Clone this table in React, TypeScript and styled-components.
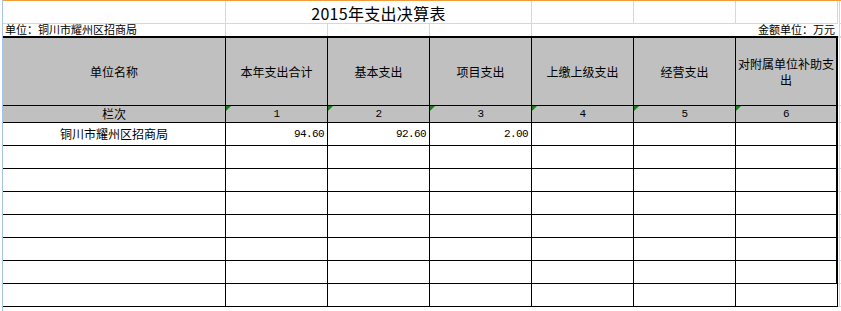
import React from 'react';
import styled, { createGlobalStyle } from 'styled-components';

// 表格颜色
const GRID = '#d0d7e5';
const INK = '#000';
const HEAD_FILL = '#c0c0c0';

const GlobalStyle = createGlobalStyle`
  html, body {
    margin: 0;
    padding: 0;
    background: #fff;
  }
  body {
    font-family: "Noto Sans CJK SC", "Noto Sans", sans-serif;
    color: #000;
    overflow: hidden;
  }
`;

const Sheet = styled.div`
  width: 838px;
  height: 311px;
  margin-left: 2px;
  border-left: 1px solid #a9c3e6;
`;

const Row = styled.div<{ $h: number; $top?: boolean }>`
  display: grid;
  grid-template-columns: 223px repeat(6, 102px) 3px;
  height: ${(p) => p.$h}px;
  box-sizing: border-box;
  border-top: ${(p) => (p.$top ? '1px solid #f29b38' : 'none')};
`;

// --- 表头上方的普通网格单元 ---
const GridCell = styled.div<{ $span?: number; $bottom?: boolean; $right?: boolean; $align?: 'left' | 'center' | 'right' }>`
  box-sizing: border-box;
  grid-column: span ${(p) => p.$span ?? 1};
  display: flex;
  align-items: center;
  justify-content: ${(p) => (p.$align === 'right' ? 'flex-end' : p.$align === 'center' ? 'center' : 'flex-start')};
  border-right: 1px solid ${(p) => (p.$right === false ? 'transparent' : GRID)};
  border-bottom: 1px solid ${(p) => (p.$bottom === false ? 'transparent' : GRID)};
  padding: 0 2px;
  font-size: 11px;
  line-height: 13px;
  white-space: nowrap;
  overflow: visible;
`;

const Title = styled.span`
  font-size: 16px;
  line-height: 20px;
  padding-top: 2px;
  letter-spacing: 0.3px;
`;

// --- 黑框表格单元 ---
const Cell = styled.div<{ $head?: boolean; $thick?: boolean; $first?: boolean; $align?: 'center' | 'right' }>`
  position: relative;
  box-sizing: border-box;
  display: flex;
  align-items: center;
  justify-content: ${(p) => (p.$align === 'right' ? 'flex-end' : 'center')};
  text-align: center;
  background: ${(p) => (p.$head ? HEAD_FILL : '#fff')};
  border-right: ${(p) => (p.$thick ? 2 : 1)}px solid ${INK};
  border-bottom: 1px solid ${INK};
  border-top: ${(p) => (p.$first ? `2px solid ${INK}` : 'none')};
  padding: 0 ${(p) => (p.$align === 'right' ? '3px' : '1px')} 0 1px;
  font-size: 12px;
  line-height: 16px;
`;

const Num = styled.span`
  font-family: "Liberation Mono", "DejaVu Sans Mono", monospace;
  font-size: 11px;
  letter-spacing: -0.6px;
`;

// 绿色小三角（文本型数字提示）
const Flag = styled.span`
  position: absolute;
  top: 0;
  left: 0;
  width: 0;
  height: 0;
  border-top: 5px solid #1a7f1a;
  border-right: 5px solid transparent;
`;

const Stub = styled.div<{ $first?: boolean }>`
  box-sizing: border-box;
  border-bottom: 1px solid ${GRID};
  border-top: ${(p) => (p.$first ? `2px solid ${GRID}` : 'none')};
  box-shadow: inset 1px 0 0 #fff, inset 2px 0 0 ${GRID};
`;

const headers = ['本年支出合计', '基本支出', '项目支出', '上缴上级支出', '经营支出', '对附属单位补助支出'];

const rows: { name: string; values: string[] }[] = [
  { name: '铜川市耀州区招商局', values: ['94.60', '92.60', '2.00', '', '', ''] },
  ...Array.from({ length: 7 }, () => ({ name: '', values: ['', '', '', '', '', ''] })),
];

export default function App() {
  return (
    <>
      <GlobalStyle />
      <Sheet>
        <Row $h={23} $top>
          <GridCell />
          <GridCell $span={3} $align="center">
            <Title>2015年支出决算表</Title>
          </GridCell>
          <GridCell />
          <GridCell />
          <GridCell />
          <Stub />
        </Row>

        <Row $h={13}>
          <GridCell $bottom={false}>单位：铜川市耀州区招商局</GridCell>
          <GridCell $bottom={false} />
          <GridCell $bottom={false} />
          <GridCell $bottom={false} />
          <GridCell $span={3} $bottom={false} $right={false} $align="right">
            金额单位：万元
          </GridCell>
          <Stub />
        </Row>

        <Row $h={70}>
          <Cell $head $first>单位名称</Cell>
          {headers.map((h, i) => (
            <Cell key={h} $head $first $thick={i === headers.length - 1}>
              {h}
            </Cell>
          ))}
          <Stub $first />
        </Row>

        <Row $h={17}>
          <Cell $head>栏次</Cell>
          {headers.map((h, i) => (
            <Cell key={h} $head $thick={i === headers.length - 1}>
              <Flag />
              <Num>{i + 1}</Num>
            </Cell>
          ))}
          <Stub />
        </Row>

        {rows.map((r, ri) => (
          <Row $h={23} key={ri}>
            <Cell>{r.name}</Cell>
            {r.values.map((v, i) => (
              <Cell key={i} $align="right" $thick={i === r.values.length - 1 && ri < rows.length - 1}>
                <Num>{v}</Num>
              </Cell>
            ))}
            <Stub />
          </Row>
        ))}
      </Sheet>
    </>
  );
}
